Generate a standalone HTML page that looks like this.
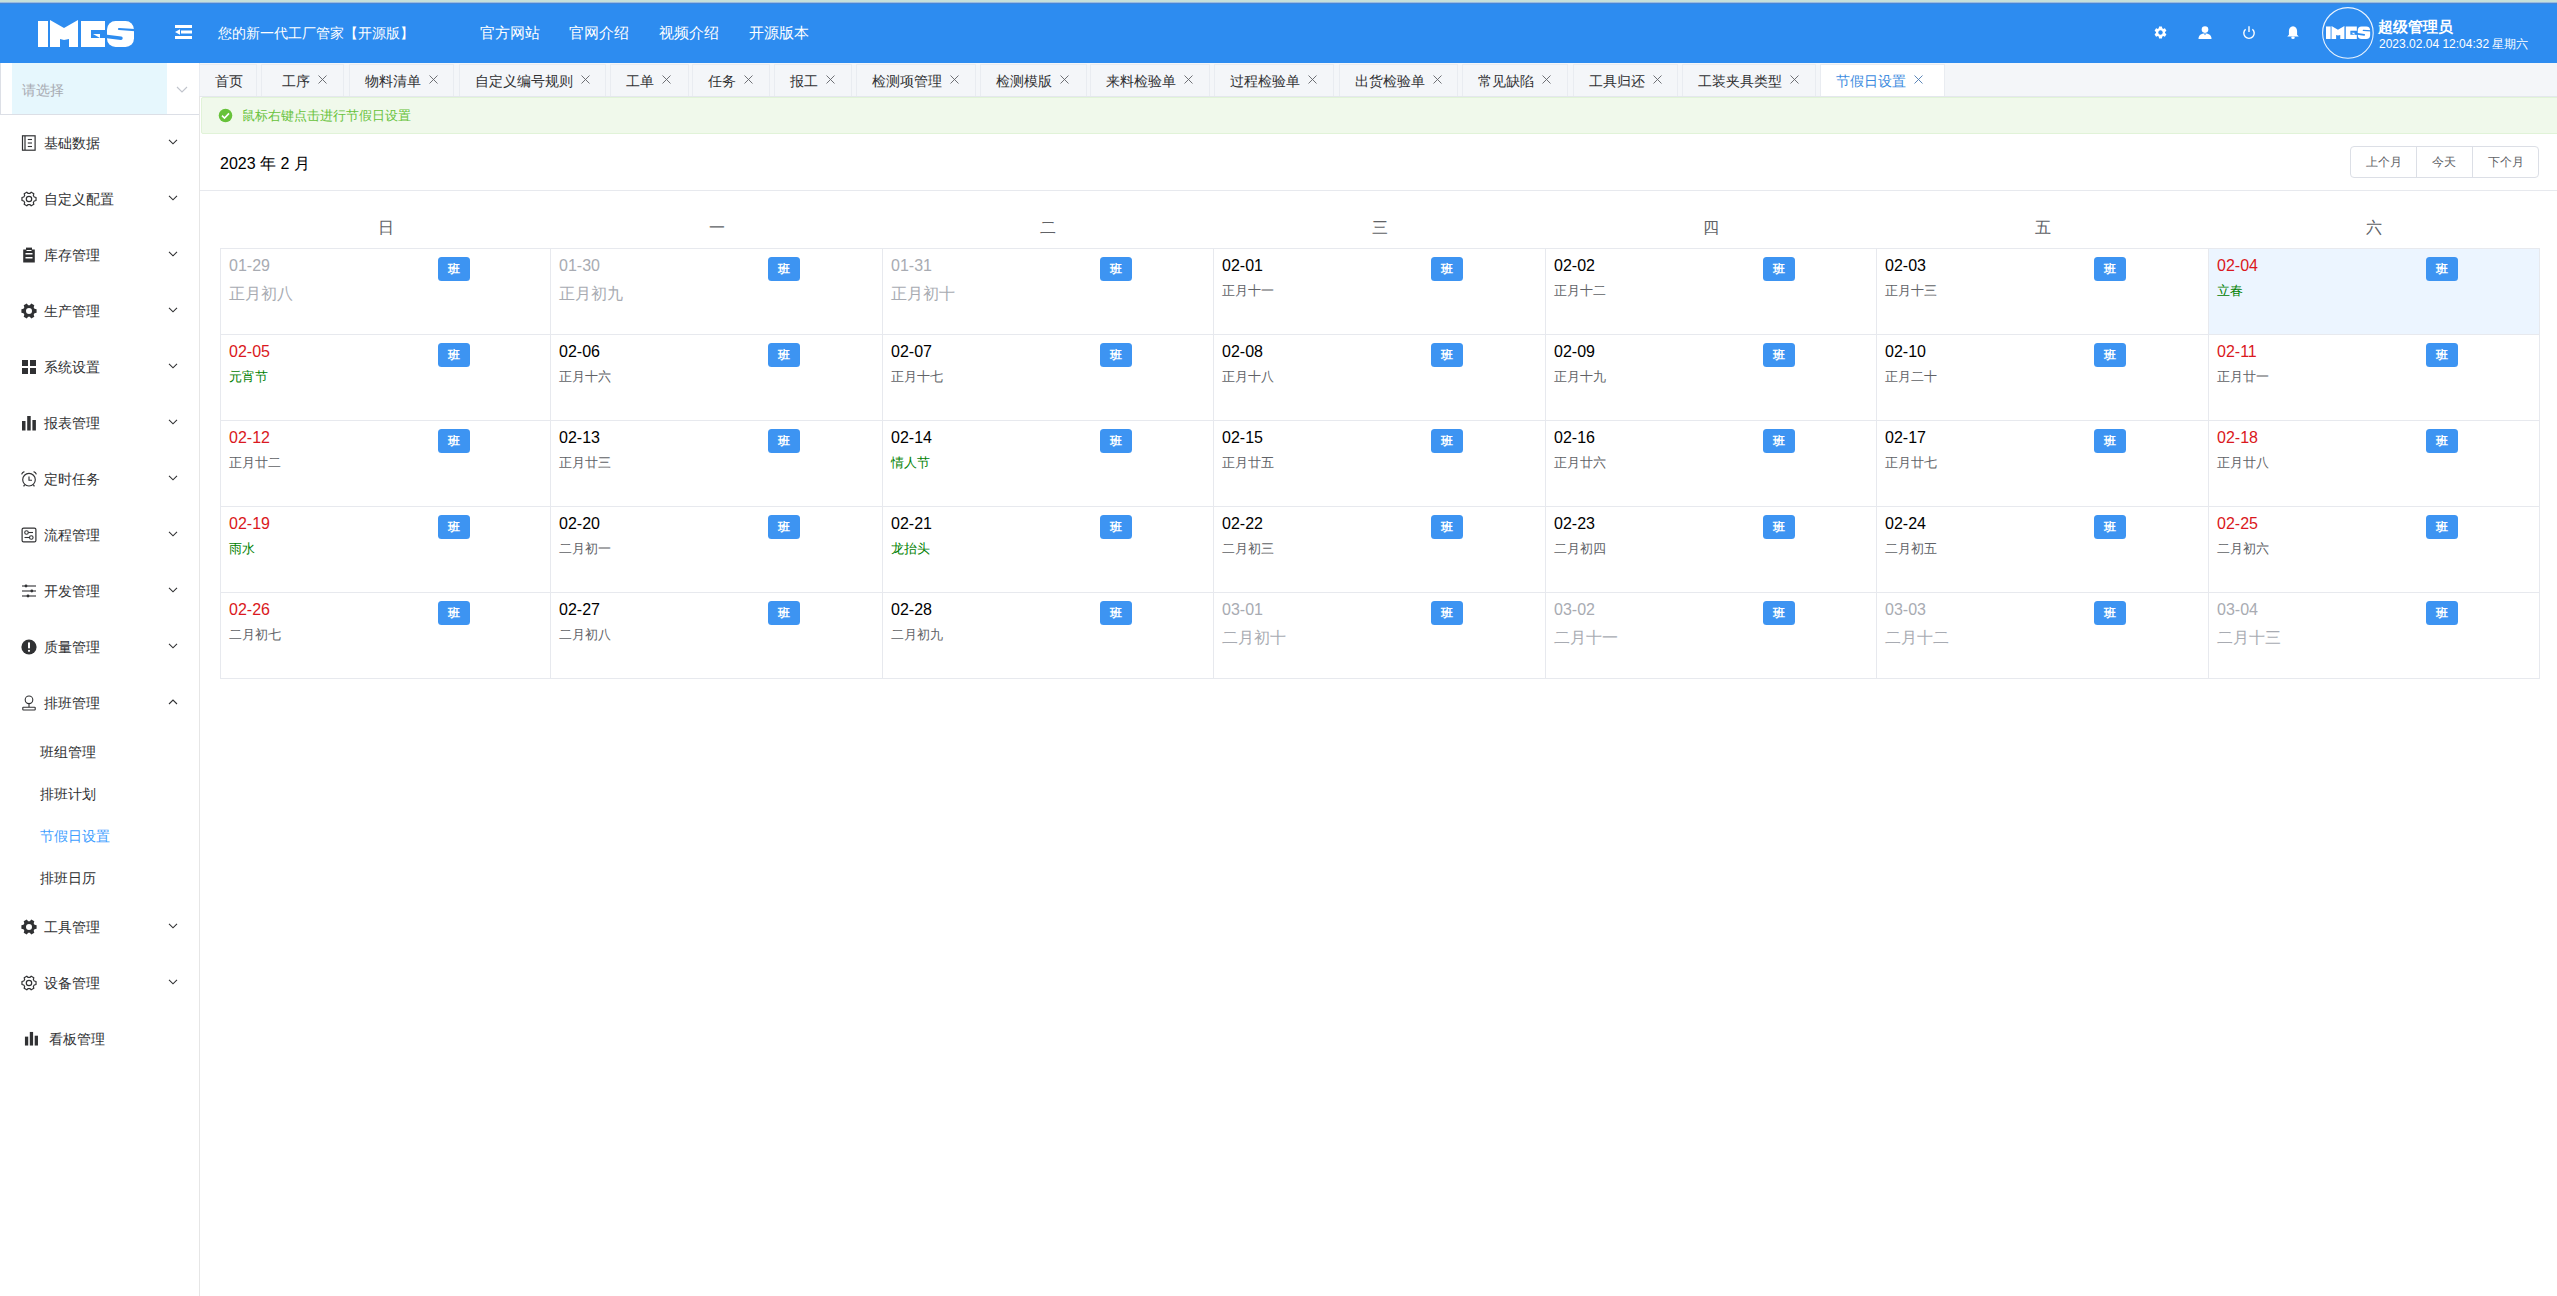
<!DOCTYPE html><html><head><meta charset="utf-8"><title>节假日设置</title><style>
*{box-sizing:border-box;margin:0;padding:0}
html,body{width:2557px;height:1296px;overflow:hidden;background:#fff;font-family:"Liberation Sans", sans-serif;color:#303133}
.abs{position:absolute}
#header{left:0;top:0;width:2557px;height:63px;background:#2d8cf0}
#topline{left:0;top:0;width:2557px;height:4px;background:linear-gradient(#c6e0da 0,#c6e0da 1.5px,#c4e2ee 2px,#8fb4de 2.6px,#4a86d4 3.3px,#3a86e6 4px)}
.htxt{position:absolute;color:#fff;font-size:14px;line-height:16px;white-space:nowrap}
#sidebar{left:0;top:63px;width:200px;height:1233px;background:#fff;border-right:1px solid #e6e6e6}
#sel{left:0;top:0;width:199px;height:52px;border-left:1px solid #dcdfe6;border-bottom:1px solid #dcdfe6;background:#fff}
#selin{left:11px;top:0;width:155px;height:51px;background:#e6f7fd}
.mi{position:absolute;left:0;width:199px;height:56px}
.mi .t{position:absolute;left:44px;top:21px;font-size:14px;line-height:16px;color:#303133;white-space:nowrap}
.mi svg.ic{position:absolute;left:21px;top:21px}
.mi svg.ch{position:absolute;left:168px;top:25px}
.si{position:absolute;left:40px;font-size:14px;line-height:16px;color:#303133;white-space:nowrap}
#tabs{left:200px;top:63px;width:2357px;height:34px;background:#f4f6f9;border-bottom:1px solid #e4e7ed}
.tab{position:absolute;top:1px;height:32px;background:#f4f6f9;border:1px solid #e9ecf1;border-bottom:none;font-size:14px;line-height:16px;color:#303133;white-space:nowrap}
.tab .tt{position:absolute;left:15px;top:8px}
.tab .x{position:absolute;top:10px;width:9px;height:9px}
.tab .x path{stroke:#606266;stroke-width:0.9}
.tab.act .x path{stroke:#4a78b0}
.tab.act{background:#fff}
.tab.act .tt{color:#3b8be0}
#alert{left:201px;top:97px;width:2370px;height:37px;background:#f0f9eb;border:1px solid #e1f3d8;border-radius:2px}
#alert .t{position:absolute;left:40px;top:10px;font-size:13px;line-height:15px;color:#67c23a;white-space:nowrap}
#calhead{left:200px;top:134px;width:2357px;height:57px;border-bottom:1px solid #e7e9ee}
#caltitle{left:20px;top:21px;font-size:16px;line-height:18px;color:#000;white-space:nowrap}
#btns{left:2150px;top:12px;width:189px;height:32px;border:1px solid #dcdfe6;border-radius:4px}
.btn{position:absolute;top:0;height:30px;font-size:12px;line-height:14px;color:#606266;white-space:nowrap}
.btn span{position:absolute;top:8px}
.wk{position:absolute;top:219px;font-size:16px;line-height:18px;color:#606266;width:40px;text-align:center}
#grid{left:220px;top:248px;width:2320px;height:431px}
.cell{position:absolute;height:86px;border-right:1px solid #e7e9ee;border-bottom:1px solid #e7e9ee}
.cell .d{position:absolute;left:8px;top:8px;font-size:16px;line-height:18px;color:#000;white-space:nowrap}
.cell .l{position:absolute;left:8px;top:34px;font-size:13px;line-height:15px;color:#606266;white-space:nowrap}
.cell.o .d{color:#a8abb2}
.cell.o .l{top:36px;font-size:16px;line-height:18px;color:#a8abb2}
.cell .d.r{color:#da1820}
.cell .l.g{color:#008000}
.cell .b{position:absolute;left:217px;top:8px;width:32px;height:24px;border-radius:3.5px;background:#3d94f2;color:#fff;font-size:12px;line-height:24px;text-align:center;font-family:"Liberation Serif",serif;font-weight:bold}
</style></head><body>
<div id="header" class="abs">
<div id="topline" class="abs"></div>
<svg class="abs" style="left:37px;top:20px" width="98" height="28" viewBox="37 20 98 28">
<rect x="38" y="21" width="10" height="26" fill="#fff"/>
<polygon points="50,20 64,28 78,20 78,47 69,47 69,39 64,40 60,39 60,47 50,47" fill="#fff"/>
<polygon points="81,21 105,21 105,30 91,30 91,38 105,38 105,47 81,47" fill="#fff"/>
<polygon points="93,34 100,34 100,38" fill="#fff"/>
<rect x="107" y="21" width="27" height="26" rx="8.5" fill="#fff"/>
<line x1="119" y1="29" x2="136" y2="30.2" stroke="#2d8cf0" stroke-width="2.2" stroke-linecap="round"/>
<line x1="103" y1="36" x2="121" y2="38.3" stroke="#2d8cf0" stroke-width="3.4" stroke-linecap="round"/>
</svg>
<svg class="abs" style="left:175px;top:25px" width="18" height="15" viewBox="0 0 18 15">
<rect x="0" y="0" width="17" height="3" fill="#fff"/>
<rect x="6" y="5.5" width="11" height="3" fill="#fff"/>
<rect x="0" y="11" width="17" height="3" fill="#fff"/>
<polygon points="0,7 5,4.2 5,9.8" fill="#fff"/>
</svg>
<div class="htxt" style="left:218px;top:25px">您的新一代工厂管家【开源版】</div>
<div class="htxt" style="left:480px;top:25px;font-size:15px">官方网站</div>
<div class="htxt" style="left:569px;top:25px;font-size:15px">官网介绍</div>
<div class="htxt" style="left:659px;top:25px;font-size:15px">视频介绍</div>
<div class="htxt" style="left:749px;top:25px;font-size:15px">开源版本</div>
<svg class="abs" style="left:2153px;top:25px" width="15" height="15" viewBox="0 0 24 24"><path fill="#fff" d="M19.14 12.94c.04-.3.06-.61.06-.94 0-.32-.02-.64-.07-.94l2.03-1.58a.49.49 0 0 0 .12-.61l-1.92-3.32a.488.488 0 0 0-.59-.22l-2.39.96c-.5-.38-1.03-.7-1.62-.94l-.36-2.54a.484.484 0 0 0-.48-.41h-3.84c-.24 0-.43.17-.47.41l-.36 2.54c-.59.24-1.13.57-1.62.94l-2.39-.96c-.22-.08-.47 0-.59.22L2.74 8.87c-.12.21-.08.47.12.61l2.03 1.58c-.05.3-.09.63-.09.94s.02.64.07.94l-2.03 1.58a.49.49 0 0 0-.12.61l1.92 3.32c.12.22.37.29.59.22l2.39-.96c.5.38 1.03.7 1.62.94l.36 2.54c.05.24.24.41.48.41h3.84c.24 0 .44-.17.47-.41l.36-2.54c.59-.24 1.13-.56 1.62-.94l2.39.96c.22.08.47 0 .59-.22l1.92-3.32c.12-.22.07-.47-.12-.61l-2.01-1.58zM12 15.6c-1.98 0-3.6-1.62-3.6-3.6s1.62-3.6 3.6-3.6 3.6 1.62 3.6 3.6-1.62 3.6-3.6 3.6z"/></svg>
<svg class="abs" style="left:2198px;top:26px" width="14" height="14" viewBox="0 0 14 14"><circle cx="7" cy="3.6" r="3.3" fill="#fff"/><path d="M0.5,13 C0.5,9.2 3.2,7.6 7,7.6 C10.8,7.6 13.5,9.2 13.5,13 Z" fill="#fff"/><polygon points="6,7.8 8,7.8 7,9.3" fill="#2d8cf0"/></svg>
<svg class="abs" style="left:2242px;top:26px" width="14" height="14" viewBox="0 0 14 14"><path d="M3.6,3.2 A5.2,5.2 0 1 0 10.4,3.2" fill="none" stroke="#fff" stroke-width="1.4"/><line x1="7" y1="0.3" x2="7" y2="6" stroke="#fff" stroke-width="1.4"/></svg>
<svg class="abs" style="left:2286px;top:26px" width="14" height="13" viewBox="0 0 14 14"><path d="M7,0.3 C4.2,0.3 2.6,2.6 2.6,5.5 V9.5 L0.8,11.2 H13.2 L11.4,9.5 V5.5 C11.4,2.6 9.8,0.3 7,0.3 Z" fill="#fff"/><ellipse cx="7" cy="12.6" rx="1.9" ry="1.3" fill="#fff"/></svg>
<svg class="abs" style="left:2322px;top:7px" width="54" height="54" viewBox="0 0 54 54"><circle cx="25.9" cy="25.9" r="25.3" fill="none" stroke="#fff" stroke-opacity="0.9" stroke-width="1.1"/>
<g transform="translate(4,19) scale(0.46,0.48) translate(-38,-20)">
<rect x="38" y="21" width="10" height="26" fill="#fff"/>
<polygon points="50,20 64,28 78,20 78,47 69,47 69,39 64,40 60,39 60,47 50,47" fill="#fff"/>
<polygon points="81,21 105,21 105,30 91,30 91,38 105,38 105,47 81,47" fill="#fff"/>
<polygon points="93,34 100,34 100,38" fill="#fff"/>
<rect x="107" y="21" width="27" height="26" rx="8.5" fill="#fff"/>
<line x1="119" y1="29" x2="136" y2="30.2" stroke="#2d8cf0" stroke-width="2.6" stroke-linecap="round"/>
<line x1="103" y1="36" x2="121" y2="38.3" stroke="#2d8cf0" stroke-width="3.8" stroke-linecap="round"/>
</g></svg>
<div class="htxt" style="left:2378px;top:19px;font-size:15px;font-weight:bold">超级管理员</div>
<div class="htxt" style="left:2379px;top:37px;font-size:12px;line-height:15px">2023.02.04 12:04:32 星期六</div>
</div>
<div id="sidebar" class="abs">
<div id="sel" class="abs"><div id="selin" class="abs"></div><div class="abs" style="left:21px;top:19px;font-size:14px;line-height:16px;color:#a8abb2">请选择</div><svg class="abs" style="left:175px;top:23px" width="12" height="7" viewBox="0 0 12 7"><path d="M1,1 L6,6 L11,1" fill="none" stroke="#c0c4cc" stroke-width="1.1"/></svg></div>
<div class="mi" style="top:51px"><svg class="ic" width="16" height="16" viewBox="0 0 16 16"><rect x="1.5" y="0.8" width="12.6" height="14.4" fill="none" stroke="#303133" stroke-width="1.2"/><line x1="4" y1="1" x2="4" y2="15" stroke="#303133" stroke-width="1.2"/><line x1="6.8" y1="4.5" x2="11" y2="4.5" stroke="#303133" stroke-width="1.1"/><line x1="6.8" y1="8" x2="11" y2="8" stroke="#303133" stroke-width="1.1"/><line x1="6.8" y1="11.5" x2="11" y2="11.5" stroke="#303133" stroke-width="1.1"/></svg><div class="t">基础数据</div><svg class="ch" width="10" height="6" viewBox="0 0 10 6"><path d="M1,0.8 L5,4.8 L9,0.8" fill="none" stroke="#303133" stroke-width="1.1"/></svg></div>
<div class="mi" style="top:107px"><svg class="ic" width="16" height="16" viewBox="0 0 16 16"><path d="M13.23,5.99 L15.04,6.50 L15.04,9.50 L13.23,10.01 L12.35,11.52 L12.82,13.35 L10.22,14.85 L8.88,13.53 L7.12,13.53 L5.78,14.85 L3.18,13.35 L3.65,11.52 L2.77,10.01 L0.96,9.50 L0.96,6.50 L2.77,5.99 L3.65,4.48 L3.18,2.65 L5.78,1.15 L7.12,2.47 L8.88,2.47 L10.22,1.15 L12.82,2.65 L12.35,4.48 Z" fill="none" stroke="#303133" stroke-width="1.2" stroke-linejoin="round"/><circle cx="8" cy="8" r="2.7" fill="none" stroke="#303133" stroke-width="1.2"/></svg><div class="t">自定义配置</div><svg class="ch" width="10" height="6" viewBox="0 0 10 6"><path d="M1,0.8 L5,4.8 L9,0.8" fill="none" stroke="#303133" stroke-width="1.1"/></svg></div>
<div class="mi" style="top:163px"><svg class="ic" width="16" height="16" viewBox="0 0 16 16"><rect x="2.2" y="2.5" width="11.6" height="13" fill="#303133"/><rect x="5" y="0.6" width="6" height="2.4" fill="#303133"/><rect x="4.5" y="6" width="7" height="1.5" fill="#fff"/><rect x="4.5" y="10" width="7" height="1.5" fill="#fff"/><rect x="5.5" y="3" width="5" height="1" fill="#fff"/></svg><div class="t">库存管理</div><svg class="ch" width="10" height="6" viewBox="0 0 10 6"><path d="M1,0.8 L5,4.8 L9,0.8" fill="none" stroke="#303133" stroke-width="1.1"/></svg></div>
<div class="mi" style="top:219px"><svg class="ic" width="16" height="16" viewBox="0 0 16 16"><path fill-rule="evenodd" fill="#303133" d="M13.47,5.79 L15.60,6.25 L15.60,9.75 L13.47,10.21 L12.65,11.63 L13.32,13.70 L10.28,15.46 L8.82,13.84 L7.18,13.84 L5.72,15.46 L2.68,13.70 L3.35,11.63 L2.53,10.21 L0.40,9.75 L0.40,6.25 L2.53,5.79 L3.35,4.37 L2.68,2.30 L5.72,0.54 L7.18,2.16 L8.82,2.16 L10.28,0.54 L13.32,2.30 L12.65,4.37 Z M8,5 A3,3 0 1 0 8,11 A3,3 0 1 0 8,5 Z"/></svg><div class="t">生产管理</div><svg class="ch" width="10" height="6" viewBox="0 0 10 6"><path d="M1,0.8 L5,4.8 L9,0.8" fill="none" stroke="#303133" stroke-width="1.1"/></svg></div>
<div class="mi" style="top:275px"><svg class="ic" width="16" height="16" viewBox="0 0 16 16"><rect x="1" y="1" width="6" height="6" fill="#303133"/><rect x="9" y="1" width="6" height="6" fill="#303133"/><rect x="1" y="9" width="6" height="6" fill="#303133"/><rect x="9" y="9" width="6" height="6" fill="#303133"/></svg><div class="t">系统设置</div><svg class="ch" width="10" height="6" viewBox="0 0 10 6"><path d="M1,0.8 L5,4.8 L9,0.8" fill="none" stroke="#303133" stroke-width="1.1"/></svg></div>
<div class="mi" style="top:331px"><svg class="ic" width="16" height="16" viewBox="0 0 16 16"><rect x="1" y="6" width="3.5" height="9.5" fill="#303133"/><rect x="6.2" y="1" width="3.5" height="14.5" fill="#303133"/><rect x="11.4" y="5" width="3.5" height="10.5" fill="#303133"/></svg><div class="t">报表管理</div><svg class="ch" width="10" height="6" viewBox="0 0 10 6"><path d="M1,0.8 L5,4.8 L9,0.8" fill="none" stroke="#303133" stroke-width="1.1"/></svg></div>
<div class="mi" style="top:387px"><svg class="ic" width="16" height="16" viewBox="0 0 16 16"><circle cx="8" cy="8.7" r="6.3" fill="none" stroke="#303133" stroke-width="1.15"/><path d="M8,5.4 V9.2 H11" fill="none" stroke="#303133" stroke-width="1.15"/><path d="M0.6,3.4 Q1.2,1.2 3.4,0.6" fill="none" stroke="#303133" stroke-width="1.2"/><path d="M12.6,0.6 Q14.8,1.2 15.4,3.4" fill="none" stroke="#303133" stroke-width="1.2"/><line x1="3.6" y1="13.8" x2="2.6" y2="15.4" stroke="#303133" stroke-width="1.2"/><line x1="12.4" y1="13.8" x2="13.4" y2="15.4" stroke="#303133" stroke-width="1.2"/></svg><div class="t">定时任务</div><svg class="ch" width="10" height="6" viewBox="0 0 10 6"><path d="M1,0.8 L5,4.8 L9,0.8" fill="none" stroke="#303133" stroke-width="1.1"/></svg></div>
<div class="mi" style="top:443px"><svg class="ic" width="16" height="16" viewBox="0 0 16 16"><rect x="1.1" y="1.1" width="13.8" height="13.8" rx="1.5" fill="none" stroke="#303133" stroke-width="1.2"/><circle cx="5.5" cy="5.5" r="1.8" fill="none" stroke="#303133" stroke-width="1.1"/><line x1="7.3" y1="5.5" x2="12" y2="5.5" stroke="#303133" stroke-width="1.1"/><circle cx="10.3" cy="10.5" r="1.8" fill="none" stroke="#303133" stroke-width="1.1"/><line x1="3.5" y1="10.5" x2="8.5" y2="10.5" stroke="#303133" stroke-width="1.1"/></svg><div class="t">流程管理</div><svg class="ch" width="10" height="6" viewBox="0 0 10 6"><path d="M1,0.8 L5,4.8 L9,0.8" fill="none" stroke="#303133" stroke-width="1.1"/></svg></div>
<div class="mi" style="top:499px"><svg class="ic" width="16" height="16" viewBox="0 0 16 16"><line x1="1" y1="3" x2="15" y2="3" stroke="#303133" stroke-width="1.1"/><line x1="1" y1="8" x2="15" y2="8" stroke="#303133" stroke-width="1.1"/><line x1="1" y1="13" x2="15" y2="13" stroke="#303133" stroke-width="1.1"/><circle cx="5" cy="3" r="1.4" fill="#303133"/><circle cx="10.8" cy="8" r="1.4" fill="#303133"/><circle cx="7" cy="13" r="1.4" fill="#303133"/></svg><div class="t">开发管理</div><svg class="ch" width="10" height="6" viewBox="0 0 10 6"><path d="M1,0.8 L5,4.8 L9,0.8" fill="none" stroke="#303133" stroke-width="1.1"/></svg></div>
<div class="mi" style="top:555px"><svg class="ic" width="16" height="16" viewBox="0 0 16 16"><circle cx="8" cy="8" r="7.6" fill="#303133"/><rect x="7" y="3.2" width="2" height="6.4" rx="0.8" fill="#fff"/><circle cx="8" cy="11.8" r="1.1" fill="#fff"/></svg><div class="t">质量管理</div><svg class="ch" width="10" height="6" viewBox="0 0 10 6"><path d="M1,0.8 L5,4.8 L9,0.8" fill="none" stroke="#303133" stroke-width="1.1"/></svg></div>
<div class="mi" style="top:611px"><svg class="ic" width="16" height="16" viewBox="0 0 16 16"><circle cx="8" cy="4.8" r="3.8" fill="none" stroke="#303133" stroke-width="1.1"/><line x1="8" y1="8.6" x2="8" y2="12" stroke="#303133" stroke-width="1.1"/><rect x="1.8" y="12.2" width="12.4" height="2.8" rx="0.6" fill="none" stroke="#303133" stroke-width="1.1"/></svg><div class="t">排班管理</div><svg class="ch" width="10" height="6" viewBox="0 0 10 6"><path d="M1,5 L5,1 L9,5" fill="none" stroke="#303133" stroke-width="1.1"/></svg></div>
<div class="si" style="top:681px;color:#303133">班组管理</div>
<div class="si" style="top:723px;color:#303133">排班计划</div>
<div class="si" style="top:765px;color:#409eff">节假日设置</div>
<div class="si" style="top:807px;color:#303133">排班日历</div>
<div class="mi" style="top:835px"><svg class="ic" width="16" height="16" viewBox="0 0 16 16"><path fill-rule="evenodd" fill="#303133" d="M13.47,5.79 L15.60,6.25 L15.60,9.75 L13.47,10.21 L12.65,11.63 L13.32,13.70 L10.28,15.46 L8.82,13.84 L7.18,13.84 L5.72,15.46 L2.68,13.70 L3.35,11.63 L2.53,10.21 L0.40,9.75 L0.40,6.25 L2.53,5.79 L3.35,4.37 L2.68,2.30 L5.72,0.54 L7.18,2.16 L8.82,2.16 L10.28,0.54 L13.32,2.30 L12.65,4.37 Z M8,5 A3,3 0 1 0 8,11 A3,3 0 1 0 8,5 Z"/></svg><div class="t">工具管理</div><svg class="ch" width="10" height="6" viewBox="0 0 10 6"><path d="M1,0.8 L5,4.8 L9,0.8" fill="none" stroke="#303133" stroke-width="1.1"/></svg></div>
<div class="mi" style="top:891px"><svg class="ic" width="16" height="16" viewBox="0 0 16 16"><path d="M13.23,5.99 L15.04,6.50 L15.04,9.50 L13.23,10.01 L12.35,11.52 L12.82,13.35 L10.22,14.85 L8.88,13.53 L7.12,13.53 L5.78,14.85 L3.18,13.35 L3.65,11.52 L2.77,10.01 L0.96,9.50 L0.96,6.50 L2.77,5.99 L3.65,4.48 L3.18,2.65 L5.78,1.15 L7.12,2.47 L8.88,2.47 L10.22,1.15 L12.82,2.65 L12.35,4.48 Z" fill="none" stroke="#303133" stroke-width="1.2" stroke-linejoin="round"/><circle cx="8" cy="8" r="2.7" fill="none" stroke="#303133" stroke-width="1.2"/></svg><div class="t">设备管理</div><svg class="ch" width="10" height="6" viewBox="0 0 10 6"><path d="M1,0.8 L5,4.8 L9,0.8" fill="none" stroke="#303133" stroke-width="1.1"/></svg></div>
<div class="mi" style="top:947px"><svg class="ic" style="left:24px;top:21px"  width="15" height="15" viewBox="0 0 16 16"><rect x="1" y="6" width="3.5" height="9.5" fill="#303133"/><rect x="6.2" y="1" width="3.5" height="14.5" fill="#303133"/><rect x="11.4" y="5" width="3.5" height="10.5" fill="#303133"/></svg><div class="t" style="left:49px">看板管理</div></div>
</div>
<div id="tabs" class="abs">
<div class="tab" style="left:-1px;width:58px"><span class="tt" style="left:15px">首页</span></div>
<div class="tab" style="left:61px;width:83px"><span class="tt" style="left:20px">工序</span><svg class="x" style="left:56px" viewBox="0 0 9 9"><path d="M0.5,0.5 L8.5,8.5 M8.5,0.5 L0.5,8.5" stroke="#303133" stroke-width="1.1"/></svg></div>
<div class="tab" style="left:149px;width:105px"><span class="tt" style="left:15px">物料清单</span><svg class="x" style="left:79px" viewBox="0 0 9 9"><path d="M0.5,0.5 L8.5,8.5 M8.5,0.5 L0.5,8.5" stroke="#303133" stroke-width="1.1"/></svg></div>
<div class="tab" style="left:259px;width:147px"><span class="tt" style="left:15px">自定义编号规则</span><svg class="x" style="left:121px" viewBox="0 0 9 9"><path d="M0.5,0.5 L8.5,8.5 M8.5,0.5 L0.5,8.5" stroke="#303133" stroke-width="1.1"/></svg></div>
<div class="tab" style="left:410px;width:79px"><span class="tt" style="left:15px">工单</span><svg class="x" style="left:51px" viewBox="0 0 9 9"><path d="M0.5,0.5 L8.5,8.5 M8.5,0.5 L0.5,8.5" stroke="#303133" stroke-width="1.1"/></svg></div>
<div class="tab" style="left:492px;width:78px"><span class="tt" style="left:15px">任务</span><svg class="x" style="left:51px" viewBox="0 0 9 9"><path d="M0.5,0.5 L8.5,8.5 M8.5,0.5 L0.5,8.5" stroke="#303133" stroke-width="1.1"/></svg></div>
<div class="tab" style="left:574px;width:78px"><span class="tt" style="left:15px">报工</span><svg class="x" style="left:51px" viewBox="0 0 9 9"><path d="M0.5,0.5 L8.5,8.5 M8.5,0.5 L0.5,8.5" stroke="#303133" stroke-width="1.1"/></svg></div>
<div class="tab" style="left:656px;width:120px"><span class="tt" style="left:15px">检测项管理</span><svg class="x" style="left:93px" viewBox="0 0 9 9"><path d="M0.5,0.5 L8.5,8.5 M8.5,0.5 L0.5,8.5" stroke="#303133" stroke-width="1.1"/></svg></div>
<div class="tab" style="left:780px;width:107px"><span class="tt" style="left:15px">检测模版</span><svg class="x" style="left:79px" viewBox="0 0 9 9"><path d="M0.5,0.5 L8.5,8.5 M8.5,0.5 L0.5,8.5" stroke="#303133" stroke-width="1.1"/></svg></div>
<div class="tab" style="left:890px;width:120px"><span class="tt" style="left:15px">来料检验单</span><svg class="x" style="left:93px" viewBox="0 0 9 9"><path d="M0.5,0.5 L8.5,8.5 M8.5,0.5 L0.5,8.5" stroke="#303133" stroke-width="1.1"/></svg></div>
<div class="tab" style="left:1014px;width:120px"><span class="tt" style="left:15px">过程检验单</span><svg class="x" style="left:93px" viewBox="0 0 9 9"><path d="M0.5,0.5 L8.5,8.5 M8.5,0.5 L0.5,8.5" stroke="#303133" stroke-width="1.1"/></svg></div>
<div class="tab" style="left:1139px;width:119px"><span class="tt" style="left:15px">出货检验单</span><svg class="x" style="left:93px" viewBox="0 0 9 9"><path d="M0.5,0.5 L8.5,8.5 M8.5,0.5 L0.5,8.5" stroke="#303133" stroke-width="1.1"/></svg></div>
<div class="tab" style="left:1262px;width:106px"><span class="tt" style="left:15px">常见缺陷</span><svg class="x" style="left:79px" viewBox="0 0 9 9"><path d="M0.5,0.5 L8.5,8.5 M8.5,0.5 L0.5,8.5" stroke="#303133" stroke-width="1.1"/></svg></div>
<div class="tab" style="left:1373px;width:105px"><span class="tt" style="left:15px">工具归还</span><svg class="x" style="left:79px" viewBox="0 0 9 9"><path d="M0.5,0.5 L8.5,8.5 M8.5,0.5 L0.5,8.5" stroke="#303133" stroke-width="1.1"/></svg></div>
<div class="tab" style="left:1482px;width:134px"><span class="tt" style="left:15px">工装夹具类型</span><svg class="x" style="left:107px" viewBox="0 0 9 9"><path d="M0.5,0.5 L8.5,8.5 M8.5,0.5 L0.5,8.5" stroke="#303133" stroke-width="1.1"/></svg></div>
<div class="tab act" style="left:1620px;width:125px"><span class="tt" style="left:15px">节假日设置</span><svg class="x" style="left:93px" viewBox="0 0 9 9"><path d="M0.5,0.5 L8.5,8.5 M8.5,0.5 L0.5,8.5" stroke="#3b8be0" stroke-width="1.1"/></svg></div>
</div>
<div id="alert" class="abs"><svg class="abs" style="left:16px;top:10px" width="15" height="15" viewBox="0 0 15 15"><circle cx="7.5" cy="7.5" r="6.8" fill="#67c23a"/><path d="M4,7.6 L6.5,10 L11,5.4" fill="none" stroke="#fff" stroke-width="1.6"/></svg><div class="t">鼠标右键点击进行节假日设置</div></div>
<div id="calhead" class="abs"><div id="caltitle" class="abs">2023 年 2 月</div>
<div id="btns" class="abs"><div class="btn" style="left:0;width:66px;border-right:1px solid #dcdfe6"><span style="left:15px">上个月</span></div><div class="btn" style="left:66px;width:56px;border-right:1px solid #dcdfe6"><span style="left:15px">今天</span></div><div class="btn" style="left:122px;width:66px"><span style="left:15px">下个月</span></div></div>
</div>
<div class="wk" style="left:365.7px">日</div>
<div class="wk" style="left:697.0px">一</div>
<div class="wk" style="left:1028.4px">二</div>
<div class="wk" style="left:1359.8px">三</div>
<div class="wk" style="left:1691.1px">四</div>
<div class="wk" style="left:2022.5px">五</div>
<div class="wk" style="left:2353.8px">六</div>
<div class="abs" style="left:220px;top:248px;width:2320px;height:1px;background:#e7e9ee"></div>
<div class="abs" style="left:220px;top:248px;width:1px;height:431px;background:#e7e9ee"></div>
<div class="cell o" style="left:221px;top:249px;width:330px;"><div class="d">01-29</div><div class="l">正月初八</div><div class="b">班</div></div>
<div class="cell o" style="left:551px;top:249px;width:332px;"><div class="d">01-30</div><div class="l">正月初九</div><div class="b">班</div></div>
<div class="cell o" style="left:883px;top:249px;width:331px;"><div class="d">01-31</div><div class="l">正月初十</div><div class="b">班</div></div>
<div class="cell" style="left:1214px;top:249px;width:332px;"><div class="d">02-01</div><div class="l">正月十一</div><div class="b">班</div></div>
<div class="cell" style="left:1546px;top:249px;width:331px;"><div class="d">02-02</div><div class="l">正月十二</div><div class="b">班</div></div>
<div class="cell" style="left:1877px;top:249px;width:332px;"><div class="d">02-03</div><div class="l">正月十三</div><div class="b">班</div></div>
<div class="cell" style="left:2209px;top:249px;width:331px;background:#ecf5ff;"><div class="d r">02-04</div><div class="l g">立春</div><div class="b">班</div></div>
<div class="cell" style="left:221px;top:335px;width:330px;"><div class="d r">02-05</div><div class="l g">元宵节</div><div class="b">班</div></div>
<div class="cell" style="left:551px;top:335px;width:332px;"><div class="d">02-06</div><div class="l">正月十六</div><div class="b">班</div></div>
<div class="cell" style="left:883px;top:335px;width:331px;"><div class="d">02-07</div><div class="l">正月十七</div><div class="b">班</div></div>
<div class="cell" style="left:1214px;top:335px;width:332px;"><div class="d">02-08</div><div class="l">正月十八</div><div class="b">班</div></div>
<div class="cell" style="left:1546px;top:335px;width:331px;"><div class="d">02-09</div><div class="l">正月十九</div><div class="b">班</div></div>
<div class="cell" style="left:1877px;top:335px;width:332px;"><div class="d">02-10</div><div class="l">正月二十</div><div class="b">班</div></div>
<div class="cell" style="left:2209px;top:335px;width:331px;"><div class="d r">02-11</div><div class="l">正月廿一</div><div class="b">班</div></div>
<div class="cell" style="left:221px;top:421px;width:330px;"><div class="d r">02-12</div><div class="l">正月廿二</div><div class="b">班</div></div>
<div class="cell" style="left:551px;top:421px;width:332px;"><div class="d">02-13</div><div class="l">正月廿三</div><div class="b">班</div></div>
<div class="cell" style="left:883px;top:421px;width:331px;"><div class="d">02-14</div><div class="l g">情人节</div><div class="b">班</div></div>
<div class="cell" style="left:1214px;top:421px;width:332px;"><div class="d">02-15</div><div class="l">正月廿五</div><div class="b">班</div></div>
<div class="cell" style="left:1546px;top:421px;width:331px;"><div class="d">02-16</div><div class="l">正月廿六</div><div class="b">班</div></div>
<div class="cell" style="left:1877px;top:421px;width:332px;"><div class="d">02-17</div><div class="l">正月廿七</div><div class="b">班</div></div>
<div class="cell" style="left:2209px;top:421px;width:331px;"><div class="d r">02-18</div><div class="l">正月廿八</div><div class="b">班</div></div>
<div class="cell" style="left:221px;top:507px;width:330px;"><div class="d r">02-19</div><div class="l g">雨水</div><div class="b">班</div></div>
<div class="cell" style="left:551px;top:507px;width:332px;"><div class="d">02-20</div><div class="l">二月初一</div><div class="b">班</div></div>
<div class="cell" style="left:883px;top:507px;width:331px;"><div class="d">02-21</div><div class="l g">龙抬头</div><div class="b">班</div></div>
<div class="cell" style="left:1214px;top:507px;width:332px;"><div class="d">02-22</div><div class="l">二月初三</div><div class="b">班</div></div>
<div class="cell" style="left:1546px;top:507px;width:331px;"><div class="d">02-23</div><div class="l">二月初四</div><div class="b">班</div></div>
<div class="cell" style="left:1877px;top:507px;width:332px;"><div class="d">02-24</div><div class="l">二月初五</div><div class="b">班</div></div>
<div class="cell" style="left:2209px;top:507px;width:331px;"><div class="d r">02-25</div><div class="l">二月初六</div><div class="b">班</div></div>
<div class="cell" style="left:221px;top:593px;width:330px;"><div class="d r">02-26</div><div class="l">二月初七</div><div class="b">班</div></div>
<div class="cell" style="left:551px;top:593px;width:332px;"><div class="d">02-27</div><div class="l">二月初八</div><div class="b">班</div></div>
<div class="cell" style="left:883px;top:593px;width:331px;"><div class="d">02-28</div><div class="l">二月初九</div><div class="b">班</div></div>
<div class="cell o" style="left:1214px;top:593px;width:332px;"><div class="d">03-01</div><div class="l">二月初十</div><div class="b">班</div></div>
<div class="cell o" style="left:1546px;top:593px;width:331px;"><div class="d">03-02</div><div class="l">二月十一</div><div class="b">班</div></div>
<div class="cell o" style="left:1877px;top:593px;width:332px;"><div class="d">03-03</div><div class="l">二月十二</div><div class="b">班</div></div>
<div class="cell o" style="left:2209px;top:593px;width:331px;"><div class="d">03-04</div><div class="l">二月十三</div><div class="b">班</div></div>
</body></html>
